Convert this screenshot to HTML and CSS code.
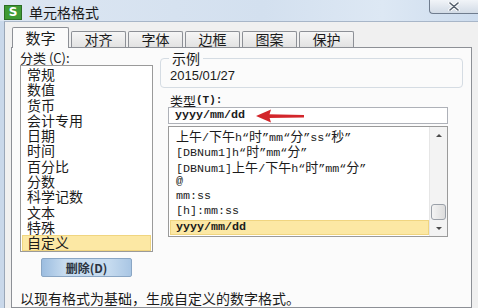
FILE: index.html
```html
<!DOCTYPE html>
<html lang="zh-CN">
<head>
    <meta charset="UTF-8">
    <title>单元格格式</title>
    <link rel="stylesheet" href="styles.css">
</head>
<body>
    <div class="window">
        <header class="titlebar">
            <span class="app-icon">S</span>
            <span class="title">单元格格式</span>
            <button class="close-btn">
                <svg width="12" height="9" viewBox="0 0 12 9">
                    <path d="M2 1 L10 8 M10 1 L2 8" stroke="#fff" stroke-width="3.4" stroke-linecap="round"/>
                    <path d="M2 1 L10 8 M10 1 L2 8" stroke="#55606e" stroke-width="1.6" stroke-linecap="round"/>
                </svg>
            </button>
        </header>

        <div class="client">
            <nav class="tabs">
                <span class="tab active">数字</span>
                <span class="tab">对齐</span>
                <span class="tab">字体</span>
                <span class="tab">边框</span>
                <span class="tab">图案</span>
                <span class="tab">保护</span>
            </nav>

            <section class="panel">
                <div class="panel-main">
                    <div class="col-left">
                        <div class="label">分类 (C):</div>
                        <ul class="listbox category">
                            <li>常规</li>
                            <li>数值</li>
                            <li>货币</li>
                            <li>会计专用</li>
                            <li>日期</li>
                            <li>时间</li>
                            <li>百分比</li>
                            <li>分数</li>
                            <li>科学记数</li>
                            <li>文本</li>
                            <li>特殊</li>
                            <li class="selected">自定义</li>
                        </ul>
                        <button class="btn">删除(D)</button>
                    </div>

                    <div class="col-right">
                        <fieldset class="sample">
                            <legend>示例</legend>
                            <div class="sample-value">2015/01/27</div>
                        </fieldset>

                        <div class="type-area">
                            <div class="label type-label">类型<span class="mono">(T):</span></div>
                            <div class="type-input">
                                yyyy/mm/dd
                                <svg class="arrow" width="50" height="16" viewBox="0 0 50 16">
                                    <polygon points="0,8 15,1.5 13,8 15,14.5" fill="#d3262b"/>
                                    <path d="M12 6.2 L48 7 L48 9.4 L12 10 Z" fill="#d3262b"/>
                                </svg>
                            </div>
                            <div class="type-list">
                                <ul class="listbox formats">
                                    <li><span class="zh">上午</span>/<span class="zh">下午</span>h“<span class="zh">时</span>”mm“<span class="zh">分</span>”ss“<span class="zh">秒</span>”</li>
                                    <li>[DBNum1]h“<span class="zh">时</span>”mm“<span class="zh">分</span>”</li>
                                    <li>[DBNum1]<span class="zh">上午</span>/<span class="zh">下午</span>h“<span class="zh">时</span>”mm“<span class="zh">分</span>”</li>
                                    <li>@</li>
                                    <li>mm:ss</li>
                                    <li>[h]:mm:ss</li>
                                    <li class="selected">yyyy/mm/dd</li>
                                </ul>
                                <div class="scrollbar">
                                    <span class="sb-btn"><i class="tri up"></i></span>
                                    <span class="sb-track"><span class="sb-thumb"></span></span>
                                    <span class="sb-btn"><i class="tri down"></i></span>
                                </div>
                            </div>
                        </div>
                    </div>
                </div>
                <p class="hint">以现有格式为基础，生成自定义的数字格式。</p>
            </section>
        </div>
    </div>
</body>
</html>
```

FILE: styles.css
```css
body {
    margin: 0;
    font-family: "Noto Sans CJK SC", "Noto Sans", sans-serif;
    color: #1b1b1b;
}

.window {
    width: 478px;
    height: 308px;
    overflow: hidden;
    display: flex;
    flex-direction: column;
    background: #c9d8ea;
}

.titlebar {
    height: 21px;
    display: flex;
    align-items: center;
    padding-left: 4px;
    background: linear-gradient(to right, #dce6f2, #d3e0ef 55%, #dde8f4 80%, #cddcee);
}

.app-icon {
    width: 16px;
    height: 13px;
    margin-top: 3px;
    background: #3e9a34;
    border: 1px solid #2c6e25;
    color: #fff;
    font: bold 12px/13px "DejaVu Sans", sans-serif;
    text-align: center;
}

.title {
    margin-left: 7px;
    font-size: 14px;
    line-height: 16px;
    margin-top: 2px;
    color: #1a1a1a;
}

.close-btn {
    margin-left: auto;
    align-self: flex-start;
    width: 49px;
    height: 14px;
    padding: 0;
    border: 1px solid #6f7c8e;
    border-top: none;
    border-right: none;
    border-radius: 0 0 0 4px;
    background: linear-gradient(#f1f4f8, #d2dbe6);
    display: flex;
    align-items: center;
    justify-content: center;
}

.client {
    flex: 1;
    margin-left: 4px;
    border-left: 1px solid #9aa7b8;
    border-top: 1px solid #a8b6c8;
    background: #f0f0f0;
    padding: 5px 6px 0 6px;
    display: flex;
    flex-direction: column;
}

.tabs {
    height: 20px;
    display: flex;
    align-items: flex-end;
    gap: 2px;
    padding-left: 1px;
    position: relative;
    z-index: 1;
}

.tab {
    box-sizing: border-box;
    width: 55px;
    height: 16px;
    border: 1px solid #8d9096;
    border-bottom: none;
    border-radius: 2px 2px 0 0;
    background: linear-gradient(#f6f6f6, #e2e2e2);
    font-size: 14px;
    line-height: 15px;
    text-align: center;
}

.tab.active {
    width: 57px;
    height: 21px;
    margin-bottom: -1px;
    background: #fbfbfb;
    font-size: 15px;
    line-height: 19px;
}

.panel {
    flex: 1;
    border: 1px solid #8d9096;
    background: #fbfbfb;
    padding: 3px 6px 0 8px;
}

.panel-main {
    display: flex;
    gap: 7px;
}

.col-left {
    width: 133px;
    display: flex;
    flex-direction: column;
    align-items: flex-start;
}

.label {
    font-size: 13px;
    line-height: 14px;
}

.listbox {
    list-style: none;
    margin: 0;
    background: #fff;
}

.category {
    box-sizing: border-box;
    width: 133px;
    height: 187px;
    border: 1px solid #9a9a9a;
    padding: 1px 1px 0 1px;
}

.category li {
    height: 15.3px;
    line-height: 15.3px;
    padding-left: 5px;
    font-size: 14px;
}

.listbox li.selected {
    background: #fce8a4;
    box-shadow: inset 0 0 0 1px #f0d580;
}

.btn {
    margin: 6px 0 0 21px;
    width: 91px;
    height: 19px;
    padding: 0;
    border: 1px solid #8aa6c4;
    border-radius: 2px;
    background: linear-gradient(to right, #9cbde0, #c6dbef 25%, #c6dbef 75%, #a9c6e4);
    font-family: "Noto Sans CJK SC", sans-serif;
    font-size: 12px;
    font-weight: bold;
    color: #2a3340;
}

.col-right {
    flex: 1;
}

.sample {
    box-sizing: border-box;
    width: 303px;
    min-width: 0;
    margin: 0;
    padding: 0 8px 3px 8px;
    border: 1px solid #d5dce3;
    border-radius: 4px;
}

.sample legend {
    padding: 0 3px;
    font-size: 14px;
    line-height: 14px;
}

.sample-value {
    font-family: "Liberation Sans", sans-serif;
    font-size: 13px;
    line-height: 17px;
    padding: 2px 0 0 1px;
}

.type-area {
    width: 280px;
    margin: 6px 0 0 8px;
}

.type-label {
    height: 13px;
    line-height: 13px;
    padding-left: 2px;
    display: flex;
    align-items: center;
}

.mono {
    font-family: "Liberation Mono", monospace;
    font-size: 11px;
    font-weight: bold;
}

.type-input {
    position: relative;
    box-sizing: border-box;
    height: 17px;
    border: 1px solid #aeb1b8;
    background: #fff;
    padding-left: 6px;
    font-family: "Liberation Mono", monospace;
    font-size: 11.7px;
    font-weight: bold;
    line-height: 15px;
}

.arrow {
    position: absolute;
    left: 87px;
    top: 0;
}

.type-list {
    box-sizing: border-box;
    height: 111px;
    margin-top: 2px;
    border: 1px solid #9a9a9a;
    background: #fff;
    display: flex;
}

.formats {
    flex: 1;
    padding: 1px 0 0 1px;
    font-family: "Liberation Mono", "Noto Sans CJK SC", monospace;
    font-size: 11.7px;
}

.formats li {
    height: 15.3px;
    line-height: 15.3px;
    padding-left: 6px;
    white-space: nowrap;
}

.formats li.selected {
    font-weight: bold;
}

.zh {
    font-family: "Noto Sans CJK SC", sans-serif;
    font-size: 13px;
}

.scrollbar {
    width: 17px;
    background: #f3f3f3;
    border-left: 1px solid #e6e6e6;
    display: flex;
    flex-direction: column;
}

.sb-btn {
    height: 16px;
    display: flex;
    align-items: center;
    justify-content: center;
}

.sb-track {
    flex: 1;
    display: flex;
    flex-direction: column;
    justify-content: flex-end;
    padding: 0 1px;
}

.sb-thumb {
    height: 14px;
    border: 1px solid #9aa0a8;
    border-radius: 3px;
    background: linear-gradient(to right, #f4f4f4, #dcdcdc);
}

.tri {
    width: 0;
    height: 0;
    border-left: 3px solid transparent;
    border-right: 3px solid transparent;
}

.tri.up {
    border-bottom: 3px solid #4a4a4a;
}

.tri.down {
    border-top: 3px solid #4a4a4a;
}

.hint {
    margin: 13px 0 0 0;
    font-size: 14px;
    line-height: 16px;
}
```
